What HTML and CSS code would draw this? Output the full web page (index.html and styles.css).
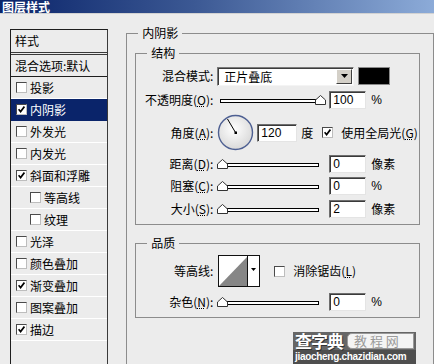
FILE: index.html
```html
<!DOCTYPE html>
<html lang="zh-CN">

<head>
    <meta charset="UTF-8">
    <meta name="viewport" content="width=device-width, initial-scale=1.0">
    <title>图层样式</title>
    <link rel="stylesheet" href="styles.css">
</head>

<body>
    <div class="titlebar"><span class="title">图层样式</span></div>

    <div class="main">
        <!-- 左侧样式列表 -->
        <div class="list">
            <div class="list-head">样式</div>
            <div class="list-blend">混合选项:默认</div>
            <div class="item"><span class="cb"></span>投影</div>
            <div class="item active"><span class="cb"><svg width="7" height="7"><path d="M0.6 3.2 L2.6 5.6 L6.4 0.6" /></svg></span>内阴影</div>
            <div class="item"><span class="cb"></span>外发光</div>
            <div class="item"><span class="cb"></span>内发光</div>
            <div class="item"><span class="cb"><svg width="7" height="7"><path d="M0.6 3.2 L2.6 5.6 L6.4 0.6" /></svg></span>斜面和浮雕</div>
            <div class="item sub"><span class="cb"></span>等高线</div>
            <div class="item sub"><span class="cb"></span>纹理</div>
            <div class="item"><span class="cb"></span>光泽</div>
            <div class="item"><span class="cb"></span>颜色叠加</div>
            <div class="item"><span class="cb"><svg width="7" height="7"><path d="M0.6 3.2 L2.6 5.6 L6.4 0.6" /></svg></span>渐变叠加</div>
            <div class="item"><span class="cb"></span>图案叠加</div>
            <div class="item"><span class="cb"><svg width="7" height="7"><path d="M0.6 3.2 L2.6 5.6 L6.4 0.6" /></svg></span>描边</div>
        </div>

        <!-- 右侧设置 -->
        <div class="panel">
            <fieldset class="group outer">
                <legend>内阴影</legend>
                <div class="outer-body">
                    <fieldset class="group">
                        <legend>结构</legend>
                        <div class="struct-body">
                            <div class="row">
                                <span class="lbl">混合模式:</span>
                                <div class="select">
                                    <span class="select-text">正片叠底</span>
                                    <span class="select-btn"><svg width="7" height="4"><path d="M0 0 H7 L3.5 4 Z" /></svg></span>
                                </div>
                                <span class="swatch"></span>
                            </div>
                            <div class="row r-opacity">
                                <span class="lbl">不透明度(<u>O</u>):</span>
                                <svg class="slider" width="110" height="10">
                                    <rect x="3.5" y="4.5" width="98" height="3" />
                                    <polygon points="98.5,9.5 98.5,5 103.5,0.5 108.5,5 108.5,9.5" />
                                </svg>
                                <span class="field">100</span>
                                <span class="unit num">%</span>
                            </div>
                            <div class="row r-angle">
                                <span class="lbl">角度(<u>A</u>):</span>
                                <svg class="dial" width="37" height="37">
                                    <defs>
                                        <radialGradient id="dialFill" cx="45%" cy="40%" r="65%">
                                            <stop offset="0" stop-color="#ffffff" />
                                            <stop offset="1" stop-color="#d6d6d6" />
                                        </radialGradient>
                                    </defs>
                                    <circle cx="18.5" cy="18.5" r="17" fill="url(#dialFill)" stroke="#4d5f92" stroke-width="1.4" />
                                    <line x1="18.5" y1="18.5" x2="10.5" y2="5" stroke="#000" stroke-width="1" />
                                    <rect x="17.5" y="17.5" width="2.5" height="2.5" fill="#000" />
                                </svg>
                                <span class="field wide">120</span>
                                <span class="deg">度</span>
                                <span class="cb big"><svg width="7" height="7"><path d="M0.6 3.2 L2.6 5.6 L6.4 0.6" /></svg></span>
                                <span class="cb-text">使用全局光(<u>G</u>)</span>
                            </div>
                            <div class="row r-dist">
                                <span class="lbl">距离(<u>D</u>):</span>
                                <svg class="slider" width="110" height="10">
                                    <rect x="3.5" y="4.5" width="98" height="3" />
                                    <polygon points="0.5,9.5 0.5,5 5.5,0.5 10.5,5 10.5,9.5" />
                                </svg>
                                <span class="field">0</span>
                                <span class="unit">像素</span>
                            </div>
                            <div class="row r-choke">
                                <span class="lbl">阻塞(<u>C</u>):</span>
                                <svg class="slider" width="110" height="10">
                                    <rect x="3.5" y="4.5" width="98" height="3" />
                                    <polygon points="0.5,9.5 0.5,5 5.5,0.5 10.5,5 10.5,9.5" />
                                </svg>
                                <span class="field">0</span>
                                <span class="unit num">%</span>
                            </div>
                            <div class="row r-size">
                                <span class="lbl">大小(<u>S</u>):</span>
                                <svg class="slider" width="110" height="10">
                                    <rect x="3.5" y="4.5" width="98" height="3" />
                                    <polygon points="0.5,9.5 0.5,5 5.5,0.5 10.5,5 10.5,9.5" />
                                </svg>
                                <span class="field">2</span>
                                <span class="unit">像素</span>
                            </div>
                        </div>
                    </fieldset>

                    <fieldset class="group quality">
                        <legend>品质</legend>
                        <div class="quality-body">
                            <div class="row r-contour">
                                <span class="lbl">等高线:</span>
                                <div class="contour">
                                    <svg class="contour-img" width="29" height="30">
                                        <polygon points="0,30 29,0 29,30" fill="#868686" />
                                    </svg>
                                    <span class="contour-btn"><svg width="5" height="3"><path d="M0 0 H5 L2.5 3 Z" /></svg></span>
                                </div>
                                <span class="cb big aa"></span>
                                <span class="cb-text">消除锯齿(<u>L</u>)</span>
                            </div>
                            <div class="row r-noise">
                                <span class="lbl">杂色(<u>N</u>):</span>
                                <svg class="slider" width="110" height="10">
                                    <rect x="3.5" y="4.5" width="98" height="3" />
                                    <polygon points="0.5,9.5 0.5,5 5.5,0.5 10.5,5 10.5,9.5" />
                                </svg>
                                <span class="field">0</span>
                                <span class="unit num">%</span>
                            </div>
                        </div>
                    </fieldset>

                    <div class="watermark">
                        <div class="wm-top">
                            <span class="wm-brand">查字典</span>
                            <span class="wm-site">教 程 网</span>
                        </div>
                        <div class="wm-url">jiaocheng.chazidian.com</div>
                    </div>
                </div>
            </fieldset>
        </div>
    </div>
</body>

</html>
```

FILE: styles.css
```css
* {
    margin: 0;
    padding: 0;
    box-sizing: border-box;
}

body {
    width: 434px;
    height: 364px;
    overflow: hidden;
    background: #ececec;
    color: #000;
    font: 12px/14px "Noto Sans CJK SC", "Liberation Sans", sans-serif;
}

u {
    text-decoration: underline dotted;
    text-underline-offset: 1px;
}

.num {
    font-family: "Liberation Sans", sans-serif;
}

/* 标题栏 */
.titlebar {
    height: 14px;
    padding-left: 2px;
    background: linear-gradient(to right, #0a246a, #3c5994 45%, #8cabd8);
    border-bottom: 1px solid #d2d2d2;
}

.title {
    display: block;
    color: #fff;
    font-weight: bold;
    font-size: 12px;
    line-height: 13px;
}

.main {
    display: flex;
    align-items: flex-start;
}

/* 样式列表 */
.list {
    width: 100px;
    height: 335px;
    margin: 15px 0 0 10px;
    overflow: hidden;
    border: 1px solid #1e1e1e;
    border-right-color: #3a3a3a;
    border-bottom: none;
}

.list-head {
    height: 25px;
    padding: 4px 0 0 4px;
    border-bottom: 3px double #3a3a3a;
}

.list-blend {
    display: flex;
    align-items: center;
    height: 22px;
    padding-left: 4px;
    border-bottom: 1px solid #1e1e1e;
}

.item {
    display: flex;
    align-items: center;
    height: 22px;
    padding-left: 5px;
    border-bottom: 1px solid #fff;
}

.item.sub {
    padding-left: 19px;
}

.item.active {
    background: #0a246a;
    color: #fff;
    border-bottom-color: #0a246a;
}

.cb {
    display: inline-flex;
    align-items: center;
    justify-content: center;
    flex: none;
    width: 11px;
    height: 11px;
    margin-right: 3px;
    background: #fff;
    border: 1px solid;
    border-color: #4a4a4a #bdbdbd #bdbdbd #4a4a4a;
}

.cb svg path {
    fill: none;
    stroke: #000;
    stroke-width: 1.6;
}

/* 右侧面板 */
.panel {
    width: 313px;
    margin: 12px 0 0 18px;
}

.group {
    min-width: 0;
    border: 1px solid #8c8c8c;
}

.group legend {
    margin-left: 11px;
    padding: 0 4px;
    line-height: 14px;
}

.outer {
    height: 338px;
    border-bottom: none;
}

.outer-body {
    padding: 6px 13px 0 8px;
}

.struct-body {
    padding: 6px 0 5px;
}

.quality {
    margin-top: 11px;
}

.quality-body {
    padding: 5px 0 5px;
}

.row {
    display: flex;
    align-items: center;
    height: 20px;
}

.r-opacity {
    margin-top: 4px;
}

.r-angle {
    height: 37px;
    margin-top: 4px;
}

.r-dist {
    margin-top: 3px;
}

.r-choke {
    margin-top: 2px;
}

.r-size {
    margin-top: 3px;
}

.r-contour {
    height: 32px;
}

.r-noise {
    margin-top: 5px;
}

.lbl {
    width: 81px;
    padding-right: 4px;
    text-align: right;
    white-space: nowrap;
}

/* 下拉框 */
.select {
    display: flex;
    width: 137px;
    height: 19px;
    background: #fff;
    border: 1px solid;
    border-color: #7a7a7a #f4f4f4 #f4f4f4 #7a7a7a;
    box-shadow: inset 1px 1px #3c3c3c;
}

.select-text {
    flex: 1;
    padding: 1px 0 0 6px;
    line-height: 16px;
}

.select-btn {
    display: flex;
    align-items: center;
    justify-content: center;
    width: 16px;
    margin: 1px 1px 1px 0;
    background: #d4d0c8;
    border: 1px solid;
    border-color: #fff #404040 #404040 #fff;
}

.select-btn path,
.contour-btn path {
    fill: #000;
}

.swatch {
    width: 32px;
    height: 18px;
    margin-left: 4px;
    background: #000;
    border: 1px solid #8a8a8a;
}

/* 滑块 */
.slider rect {
    fill: #fff;
    stroke: #000;
}

.slider polygon {
    fill: #fff;
    stroke: #333;
}

.field {
    width: 37px;
    height: 18px;
    margin-left: 2px;
    padding: 1px 0 0 3px;
    background: #fff;
    border: 1px solid;
    border-color: #6e6e6e #e4e4e4 #e4e4e4 #6e6e6e;
    box-shadow: inset 1px 1px #3a3a3a;
    font-family: "Liberation Sans", sans-serif;
    font-size: 12px;
    line-height: 15px;
}

.field.wide {
    width: 40px;
    margin-left: 3px;
}

.unit {
    margin-left: 5px;
}

.deg {
    margin-left: 4px;
}

.cb.big {
    margin-left: 9px;
    margin-right: 0;
}

.cb.aa {
    margin-left: 14px;
}

.cb-text {
    margin-left: 8px;
    white-space: nowrap;
}

/* 等高线 */
.contour {
    display: flex;
    width: 42px;
    height: 32px;
    margin-left: 1px;
    background: #fff;
    border: 1px solid #111;
}

.contour-img {
    display: block;
    border-right: 1px solid #111;
}

.contour-btn {
    display: flex;
    justify-content: center;
    flex: 1;
    padding-top: 12px;
}

/* 水印 */
.watermark {
    width: 123px;
    margin: 14px 4px 0 auto;
    background: #666;
}

.wm-top {
    display: flex;
    align-items: center;
    height: 18px;
    padding-left: 2px;
}

.wm-brand {
    color: #fff;
    font-weight: bold;
    font-size: 17px;
    line-height: 18px;
    letter-spacing: -1px;
    text-shadow: 1px 1px #333;
}

.wm-site {
    flex: 1;
    height: 16px;
    margin-left: 4px;
    margin-right: 2px;
    padding-left: 6px;
    background: #f4f4f4;
    border: 1px solid #999;
    border-radius: 5px 0 0 5px;
    color: #9a9a9a;
    font-size: 13px;
    line-height: 14px;
}

.wm-url {
    height: 14px;
    padding-left: 2px;
    background: #4e4e4e;
    color: #fff;
    font: bold 10px/14px "Liberation Sans", sans-serif;
    letter-spacing: -0.3px;
    white-space: nowrap;
}
```
